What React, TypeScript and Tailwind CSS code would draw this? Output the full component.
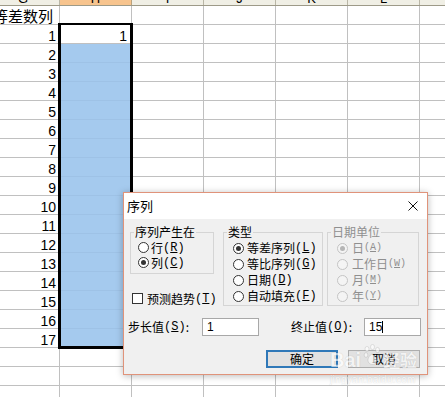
import type { ReactNode } from "react";

const ROWS = 21;
const OTHER_COLS = ["I", "J", "K", "L", "M"];

// ─── Spreadsheet ──────────────────────────────────────────────────────────────

function HeaderRow() {
  return (
    <div className="flex h-[6px] -ml-[13px] bg-[#f0efe5] border-b border-[#9d9a88] text-[13px] leading-[13px] font-['Liberation_Sans',sans-serif] text-black">
      <div className="w-[73px] shrink-0 flex items-end justify-center overflow-hidden border-r border-[#b9b6a6]">
        <span>G</span>
      </div>
      <div className="w-[72px] shrink-0 flex items-end justify-center overflow-hidden border-r border-[#b9a27d] bg-[#f7c48e]">
        <span>H</span>
      </div>
      {OTHER_COLS.map((c) => (
        <div
          key={c}
          className="w-[72px] shrink-0 flex items-end justify-center overflow-hidden border-r border-[#b9b6a6]"
        >
          <span>{c}</span>
        </div>
      ))}
    </div>
  );
}

function SheetRow({ r }: { r: number }) {
  const blue = r >= 2 && r <= 17;
  return (
    <div className="flex h-[19px] -ml-[13px] text-[14px] leading-[14px] text-black font-['Liberation_Sans_Narrow','Liberation_Sans',sans-serif]">
      <div className="w-[73px] shrink-0 flex items-end justify-end overflow-hidden whitespace-nowrap border-r border-b border-[#c0c0c0] pr-[3px]">
        {r === 0 ? (
          <span className="font-['Noto_Sans_CJK_SC',sans-serif] text-[15px] leading-[17px] pr-[3px]">等差数列</span>
        ) : r <= 17 ? (
          <span>{r}</span>
        ) : null}
      </div>
      <div
        className={`w-[72px] shrink-0 flex items-end justify-end pr-[4px] border-r border-b ${
          blue ? "bg-[#a5caee] border-[#9ec2e6]" : "border-[#c0c0c0]"
        }`}
      >
        {r === 1 && <span>1</span>}
      </div>
      {OTHER_COLS.map((c) => (
        <div key={c} className="w-[72px] shrink-0 border-r border-b border-[#c0c0c0]" />
      ))}
    </div>
  );
}

// ─── Dialog bits ──────────────────────────────────────────────────────────────

function Radio({
  checked,
  disabled,
  h,
  pl,
  gap,
  children,
}: {
  checked?: boolean;
  disabled?: boolean;
  h: string;
  pl: string;
  gap: string;
  children: ReactNode;
}) {
  return (
    <div className={`flex items-center ${h} ${pl} whitespace-nowrap ${disabled ? "text-[#8f8f8f]" : ""}`}>
      <span
        className={`w-[11px] h-[11px] shrink-0 rounded-full border flex items-center justify-center ${
          disabled ? "border-[#c4c4c4] bg-[#f4f4f4]" : "border-[#333] bg-white"
        }`}
      >
        {checked && (
          <span className={`w-[5px] h-[5px] rounded-full ${disabled ? "bg-[#b5b5b5]" : "bg-[#333]"}`} />
        )}
      </span>
      <span className={`${gap} flex items-center`}>{children}</span>
    </div>
  );
}

function Key({ k, small }: { k: string; small?: boolean }) {
  return (
    <span className={`font-['Liberation_Mono',monospace] ${small ? "text-[10px]" : "text-[12px]"}`}>
      (<u>{k}</u>)
    </span>
  );
}

function Watermark() {
  return (
    <div className="absolute left-[330px] top-[342px] flex flex-col items-start pointer-events-none text-white [text-shadow:0_0_1px_rgba(0,0,0,0.3)] opacity-60">
      <div className="flex items-end h-[28px]">
        <span className="font-['Liberation_Sans',sans-serif] font-bold text-[20px] leading-[20px]">Bai</span>
        <svg width="18" height="24" viewBox="0 0 18 24" className="mx-[2px] mb-[2px]">
          <g fill="white" stroke="rgba(0,0,0,0.25)" strokeWidth="0.6">
            <ellipse cx="4" cy="5" rx="2" ry="2.6" />
            <ellipse cx="9.5" cy="3" rx="2" ry="2.6" />
            <ellipse cx="14.5" cy="6" rx="2" ry="2.6" />
            <ellipse cx="3" cy="11" rx="1.8" ry="2.3" />
            <path d="M9 10 C5 12 4 17 6 19 C8 21 11 21 13 19 C15 17 13 12 9 10 Z" />
          </g>
        </svg>
        <span className="font-['Noto_Sans_CJK_SC',sans-serif] font-bold text-[17px] leading-[20px]">经验</span>
      </div>
      <span className="mt-[4px] font-['Liberation_Sans',sans-serif] text-[10px] leading-[12px] tracking-[0.3px]">
        jingyan.baidu.com
      </span>
    </div>
  );
}

function SeriesDialog() {
  return (
    <div className="absolute left-[123px] top-[192px] w-[305px] h-[183px] flex flex-col border border-[#e0937a] bg-[#f0f0f0] shadow-[0_1px_7px_rgba(0,0,0,0.28)] font-['Noto_Sans_CJK_SC',sans-serif] text-[12px] leading-[16px] text-black">
      {/* Title bar */}
      <div className="h-[26px] shrink-0 bg-white flex items-center justify-between pl-[3px] pr-[9px]">
        <span className="text-[13px]">序列</span>
        <svg width="10" height="10" viewBox="0 0 10 10">
          <path d="M0.5 0.5 L9.5 9.5 M9.5 0.5 L0.5 9.5" stroke="#111" strokeWidth="1" />
        </svg>
      </div>

      <div className="flex-1 flex flex-col pt-[5px] pl-[6px] pr-[7px]">
        <div className="flex">
          <div className="w-[84px] shrink-0 flex flex-col">
            <fieldset className="h-[50px] border border-[#d5d5d5]">
              <legend className="ml-[3px] px-[1px] leading-[16px]">序列产生在</legend>
              <Radio h="h-[15px]" pl="pl-[7px]" gap="ml-[2px]">
                行<Key k="R" />
              </Radio>
              <Radio checked h="h-[15px]" pl="pl-[7px]" gap="ml-[2px]">
                列<Key k="C" />
              </Radio>
            </fieldset>
            <div className="mt-[17px] h-[15px] flex items-center pl-[2px] whitespace-nowrap">
              <span className="w-[11px] h-[11px] shrink-0 border border-[#333] bg-white" />
              <span className="ml-[4px] flex items-center">
                预测趋势<Key k="T" />
              </span>
            </div>
          </div>

          <fieldset className="ml-[9px] w-[100px] h-[82px] shrink-0 border border-[#d5d5d5]">
            <legend className="ml-[3px] px-[1px] leading-[16px]">类型</legend>
            <Radio checked h="h-[16px]" pl="pl-[9px]" gap="ml-[3px]">
              等差序列<Key k="L" />
            </Radio>
            <Radio h="h-[16px]" pl="pl-[9px]" gap="ml-[3px]">
              等比序列<Key k="G" />
            </Radio>
            <Radio h="h-[16px]" pl="pl-[9px]" gap="ml-[3px]">
              日期<Key k="D" />
            </Radio>
            <Radio h="h-[16px]" pl="pl-[9px]" gap="ml-[3px]">
              自动填充<Key k="F" />
            </Radio>
          </fieldset>

          <fieldset className="ml-[4px] w-[92px] h-[82px] shrink-0 border border-[#d5d5d5]">
            <legend className="ml-[3px] px-[1px] leading-[16px] text-[#8f8f8f]">日期单位</legend>
            <Radio checked disabled h="h-[16px]" pl="pl-[9px]" gap="ml-[4px]">
              日<Key k="A" small />
            </Radio>
            <Radio disabled h="h-[16px]" pl="pl-[9px]" gap="ml-[4px]">
              工作日<Key k="W" small />
            </Radio>
            <Radio disabled h="h-[16px]" pl="pl-[9px]" gap="ml-[4px]">
              月<Key k="M" small />
            </Radio>
            <Radio disabled h="h-[16px]" pl="pl-[9px]" gap="ml-[4px]">
              年<Key k="Y" small />
            </Radio>
          </fieldset>
        </div>

        {/* Step / stop values */}
        <div className="mt-[12px] h-[18px] flex items-center -ml-[2px] whitespace-nowrap">
          <span className="w-[74px] shrink-0 flex items-center">
            步长值<Key k="S" />:
          </span>
          <div className="w-[57px] h-[18px] shrink-0 border border-[#a8a8a8] bg-white flex items-center pl-[4px] font-['Liberation_Sans',sans-serif]">
            1
          </div>
          <span className="ml-[32px] w-[73px] shrink-0 flex items-center">
            终止值<Key k="O" />:
          </span>
          <div className="w-[57px] h-[18px] shrink-0 border border-[#a8a8a8] bg-white flex items-center pl-[4px] font-['Liberation_Sans',sans-serif]">
            15<span className="w-px h-[12px] bg-black" />
          </div>
        </div>

        {/* Buttons */}
        <div className="mt-[14px] flex justify-end gap-[10px]">
          <div className="w-[72px] h-[18px] border-2 border-[#2f78b8] bg-[#e1e1e1] flex items-center justify-center">
            确定
          </div>
          <div className="w-[72px] h-[18px] border border-[#adadad] bg-[#e1e1e1] flex items-center justify-center">
            取消
          </div>
        </div>
      </div>
    </div>
  );
}

// ─── Page ─────────────────────────────────────────────────────────────────────

export default function App() {
  return (
    <div className="relative w-[445px] h-[397px] overflow-hidden bg-white">
      <HeaderRow />
      {Array.from({ length: ROWS }, (_, r) => (
        <SheetRow key={r} r={r} />
      ))}

      {/* Selection outline H1:H17 */}
      <div className="absolute left-[58px] top-[23px] w-[75px] h-[326px] border-x-[3px] border-t-[2px] border-b-[3px] border-black pointer-events-none" />

      <SeriesDialog />
      <Watermark />
    </div>
  );
}
